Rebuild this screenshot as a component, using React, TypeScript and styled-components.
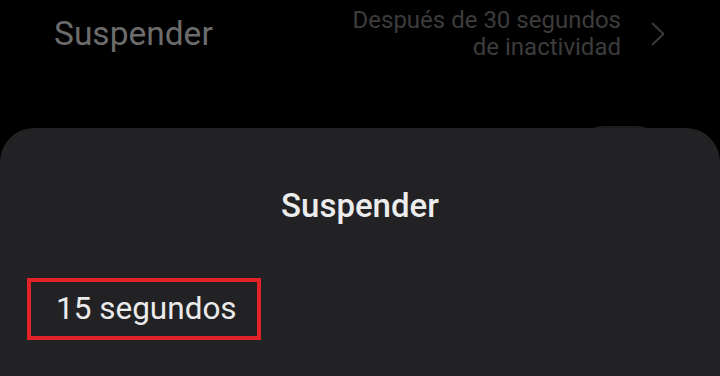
import styled, { createGlobalStyle } from "styled-components"

const GlobalStyle = createGlobalStyle`
  html, body {
    margin: 0;
    padding: 0;
    background: #000;
    font-family: Roboto, "Noto Sans", sans-serif;
  }
  #root {
    height: 376px;
    overflow: hidden;
  }
`

const Screen = styled.div`
  position: relative;
  width: 720px;
  height: 376px;
  background: #000;
  overflow: hidden;
`

const SettingRow = styled.div<{ $top?: number }>`
  display: flex;
  align-items: center;
  justify-content: space-between;
  height: 67px;
  padding: ${p => p.$top ?? 0}px 55px 0 54px;
`

const RowLabel = styled.div`
  font-size: 33.5px;
  line-height: 40px;
  font-weight: 400;
  color: #6c6c6c;
`

const RowValue = styled.div`
  display: flex;
  align-items: center;
  gap: 30px;
`

const ValueText = styled.div`
  font-size: 24px;
  line-height: 27px;
  font-weight: 400;
  color: #3c3c3c;
  text-align: right;
`

const Toggle = styled.div`
  width: 80px;
  height: 44px;
  margin-left: auto;
  margin-right: 5px;
  border-radius: 22px;
  background: #1c1c1c;
`

const Sheet = styled.div`
  position: absolute;
  left: 0;
  right: 0;
  top: 128px;
  bottom: 0;
  background: #222224;
  border-radius: 34px 34px 0 0;
  padding: 58px 27px 0;
`

const SheetTitle = styled.div`
  text-align: center;
  font-size: 33px;
  line-height: 40px;
  font-weight: 500;
  color: #ececec;
`

const OptionList = styled.div`
  margin-top: 52px;
`

const Option = styled.div<{ $marked?: boolean }>`
  display: flex;
  align-items: center;
  box-sizing: border-box;
  width: 234px;
  height: 62px;
  padding-left: 25px;
  border: 4px solid ${p => (p.$marked ? "#e3222a" : "transparent")};
  font-size: 31.5px;
  line-height: 54px;
  font-weight: 400;
  color: #ebebeb;
`

const Chevron = () => (
  <svg width="14" height="24" viewBox="0 0 14 24" fill="none">
    <path d="M1.5 1.5 L12.5 12 L1.5 22.5" stroke="#3c3c3c" strokeWidth="1.8" strokeLinecap="round" strokeLinejoin="round" />
  </svg>
)

const App = () => {
  return (
    <Screen>
      <GlobalStyle />
      <SettingRow>
        <RowLabel>Suspender</RowLabel>
        <RowValue>
          <ValueText>
            Después de 30 segundos
            <br />
            de inactividad
          </ValueText>
          <Chevron />
        </RowValue>
      </SettingRow>
      <SettingRow $top={47}>
        <Toggle />
      </SettingRow>

      <Sheet>
        <SheetTitle>Suspender</SheetTitle>
        <OptionList>
          <Option $marked>15 segundos</Option>
        </OptionList>
      </Sheet>
    </Screen>
  )
}

export default App
